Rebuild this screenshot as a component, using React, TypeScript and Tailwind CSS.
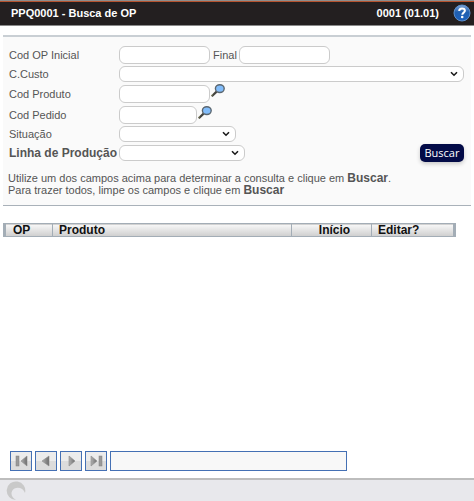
import React from "react"

function HelpIcon() {
  return (
    <svg viewBox="0 0 18 18" className="size-[18px]" aria-hidden="true">
      <defs>
        <linearGradient id="help" x1="0" y1="0" x2="0" y2="1">
          <stop offset="0" stopColor="#7fa6d8" />
          <stop offset="0.45" stopColor="#1f5fb0" />
          <stop offset="1" stopColor="#1d62bd" />
        </linearGradient>
      </defs>
      <circle cx="9" cy="9" r="8" fill="url(#help)" stroke="#5d8fcb" />
      <path
        d="M6.2 7.1C6.2 5.3 7.3 4.4 9 4.4s2.9.9 2.9 2.4c0 1.8-2.6 1.9-2.6 3.9"
        fill="none"
        stroke="#fff"
        strokeWidth="2"
      />
      <circle cx="9.2" cy="13" r="1.3" fill="#fff" />
    </svg>
  )
}

function SearchIcon() {
  return (
    <svg viewBox="0 0 14 14" className="size-[14px]" aria-hidden="true">
      <path d="M0.8 12.2L5.6 7.6" stroke="#44443f" strokeWidth="2.2" />
      <path d="M0.4 11.9L2 10.4" stroke="#8a8a60" strokeWidth="1" />
      <ellipse cx="8.8" cy="4.6" rx="4.4" ry="3.9" fill="#82bdfb" stroke="#5a6670" strokeWidth="1.4" />
    </svg>
  )
}

function Field({ id, className }: { id: string; className: string }) {
  return (
    <input
      id={id}
      type="text"
      className={`h-[18px] rounded-[6px] border border-[#cbcbcb] bg-white px-1 outline-none ${className}`}
    />
  )
}

function Select({ id, className }: { id: string; className: string }) {
  return (
    <div className={`relative ${className}`}>
      <select
        id={id}
        className="block h-4 w-full appearance-none rounded-[6px] border border-[#cbcbcb] bg-white px-1 outline-none"
      />
      <svg viewBox="0 0 8 6" className="pointer-events-none absolute top-[5px] right-[6px] h-[6px] w-2" aria-hidden="true">
        <path d="M1 1.2L4 4.2L7 1.2" fill="none" stroke="#1a1a1a" strokeWidth="1.6" />
      </svg>
    </div>
  )
}

function Row({
  id,
  label,
  className = "h-[18px]",
  bold = false,
  children,
}: {
  id: string
  label: string
  className?: string
  bold?: boolean
  children: React.ReactNode
}) {
  return (
    <div className={`flex items-center ${className}`}>
      <label htmlFor={id} className={`w-[110px] shrink-0 whitespace-nowrap ${bold ? "text-xs font-bold" : ""}`}>
        {label}
      </label>
      {children}
    </div>
  )
}

const pagerButtons = [
  { label: "Primeira página", bar: 5, arrow: "M16 5V15L10 10Z" },
  { label: "Página anterior", bar: null, arrow: "M13 5V15L6 10Z" },
  { label: "Próxima página", bar: null, arrow: "M8 5V15L14 10Z" },
  { label: "Última página", bar: 13, arrow: "M5 5V15L11 10Z" },
]

function Pager() {
  return (
    <div className="flex gap-[3px] pr-[127px] pl-[10px]">
      {pagerButtons.map((b) => (
        <button
          key={b.label}
          type="button"
          aria-label={b.label}
          className="h-5 w-[22px] shrink-0 border border-[#4470b4] bg-linear-to-b from-[#ececec] from-50% to-[#dcdcdc] to-50%"
        >
          <svg viewBox="0 0 20 20" className="-mt-px h-5 w-5" aria-hidden="true">
            <defs>
              <linearGradient id="arrow" x1="0" y1="0" x2="1" y2="0">
                <stop offset="0" stopColor="#b0b0b0" />
                <stop offset="1" stopColor="#6c6c6c" />
              </linearGradient>
            </defs>
            {b.bar !== null && <rect x={b.bar} y="5" width="3" height="10" fill="#999" stroke="#808080" strokeWidth="0.5" />}
            <path d={b.arrow} fill="url(#arrow)" stroke="#8c8c8c" strokeWidth="0.6" />
          </svg>
        </button>
      ))}
      <input
        type="text"
        aria-label="Mensagem"
        className="h-5 min-w-0 flex-1 border border-[#4470b4] bg-[#f8f8f8] px-1 outline-none"
      />
    </div>
  )
}

export default function App() {
  return (
    <div className="flex min-h-screen flex-col bg-white font-['Liberation_Sans',Arial,sans-serif] text-[11px] leading-3 text-[#555]">
      <header className="flex h-[26px] items-center border-t border-b border-t-[#8d8d8d] border-b-[#8a8a8a] bg-[#231f20] pr-[3px] pl-[11px] font-bold text-white shadow-[inset_0_1px_0_#b5532f]">
        <h1 className="flex-1">PPQ0001 - Busca de OP</h1>
        <span className="mr-[14px]">0001 (01.01)</span>
        <button type="button" aria-label="Ajuda">
          <HelpIcon />
        </button>
      </header>

      <form
        className="mx-[3px] mt-[9px] border-t-2 border-b border-t-[#c9cfd4] border-b-[#a9b1b9] bg-[#fafafa] pt-[9px] pr-[7px] pb-[9px] pl-[5px]"
        onSubmit={(e) => e.preventDefault()}
      >
        <div className="flex flex-col gap-[2px] pl-px">
          <Row id="opInicial" label="Cod OP Inicial">
            <Field id="opInicial" className="w-[91px]" />
            <label htmlFor="opFinal" className="mr-[2px] ml-[3px]">
              Final
            </label>
            <Field id="opFinal" className="w-[91px]" />
          </Row>
          <Row id="custo" label="C.Custo" className="h-4">
            <Select id="custo" className="flex-1" />
          </Row>
          <Row id="produto" label="Cod Produto" className="h-5">
            <Field id="produto" className="w-[91px]" />
            <button type="button" aria-label="Pesquisar produto" className="ml-px self-start">
              <SearchIcon />
            </button>
          </Row>
          <Row id="pedido" label="Cod Pedido">
            <Field id="pedido" className="w-[78px]" />
            <button type="button" aria-label="Pesquisar pedido" className="ml-px self-start">
              <SearchIcon />
            </button>
          </Row>
          <Row id="situacao" label="Situação" className="h-4">
            <Select id="situacao" className="w-[117px]" />
          </Row>
          <Row id="linha" label="Linha de Produção" bold>
            <Select id="linha" className="w-[126px]" />
            <button
              type="submit"
              className="ml-auto h-[18px] w-11 rounded-[5px] bg-[#030b47] font-['Open_Sans','Noto_Sans',sans-serif] text-[11px] text-white shadow-[0_2px_4px_rgba(0,0,0,0.2)]"
            >
              Buscar
            </button>
          </Row>
        </div>
        <p className="mt-[10px]">
          Utilize um dos campos acima para determinar a consulta e clique em <b className="text-xs leading-3">Buscar</b>.
          <br />
          Para trazer todos, limpe os campos e clique em <b className="text-xs leading-3">Buscar</b>
        </p>
      </form>

      <main className="mt-[17px] flex-1 pr-[18px] pl-[3px]">
        <table className="w-full table-fixed border-collapse text-left text-xs leading-3 font-bold text-[#111]">
          <thead>
            <tr className="border-y border-[#a3adb6] bg-linear-to-b from-[#f6f6f6] to-[#d0d0d0]">
              <th className="w-12 border-r border-l-[3px] border-[#a3adb6] p-0 pl-[7px]">OP</th>
              <th className="border-r border-[#a3adb6] p-0 pl-[6px]">Produto</th>
              <th className="w-20 border-r border-[#a3adb6] p-0 pl-[6px] text-center">Início</th>
              <th className="w-[83px] border-r-[3px] border-[#a3adb6] p-0 pl-[6px]">Editar?</th>
            </tr>
          </thead>
        </table>
      </main>

      <Pager />

      <footer className="mt-[7px] h-[23px] border-t-2 border-[#bdbdbd] bg-[#e8e8ec] pl-1">
        <svg viewBox="0 0 22 20" className="mt-px h-5 w-[22px]" aria-hidden="true">
          <path d="M12 19A9.3 9.3 0 1 1 21 12C19.500 7 14 5.500 10.500 7.500C6 10.500 6.500 16 12 19Z" fill="#c9c9c9" />
        </svg>
      </footer>
    </div>
  )
}
